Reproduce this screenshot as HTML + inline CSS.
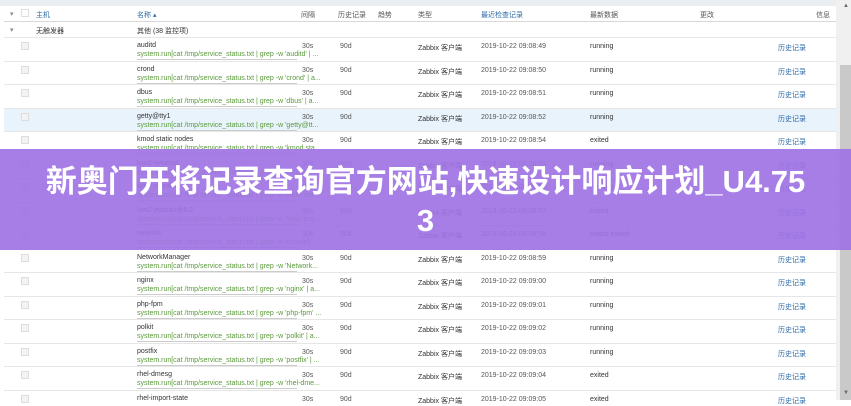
<!DOCTYPE html>
<html><head><meta charset="utf-8"><style>
*{margin:0;padding:0;box-sizing:border-box}
body{width:851px;height:400px;overflow:hidden;background:#fff;font-family:"Liberation Sans","Noto Sans CJK SC",sans-serif;font-size:7px;color:#555;position:relative}
.top{position:absolute;left:0;top:0;width:851px;height:6px;background:#ebeef0}
.sb{position:absolute;left:836px;top:0;width:15px;height:400px;background:#f0f0f0}
.thumb{position:absolute;left:840px;top:65px;width:11px;height:335px;background:#c9c9c9}
.wrap{position:absolute;left:4px;top:6px;width:832px;height:394px;background:#fff}
.r{position:absolute;left:4px;width:832px}
.t{position:absolute;white-space:nowrap}
.cb{position:absolute;left:21px;width:8px;height:8px;border:1px solid #ddd;background:#f3f3f3}
.g{color:#5a9a3a}
.b{color:#2b6aa8}
.ln{position:absolute;left:4px;width:832px;height:1px;background:#e6e6e6}
.ban{position:absolute;left:0;top:149px;width:851px;height:101px;background:rgba(160,115,228,0.92);color:#fff;font-weight:bold;font-size:31px;text-align:center;line-height:39px;padding-top:13px}
</style></head><body>
<div class="top"></div>
<div class="wrap"></div>
<div class="sb"></div><div class="thumb"></div>
<div class="t" style="left:843px;top:3px;font-size:6px;color:#666">▲</div>
<div class="t" style="left:843px;top:390px;font-size:6px;color:#666">▼</div>

<div class="t" style="left:10px;top:10px;color:#888">▾</div>
<div class="cb" style="top:9px;background:#fff"></div>
<div class="t b" style="left:36px;top:10px">主机</div>
<div class="t b" style="left:137px;top:10px">名称 ▴</div>
<div class="t" style="left:301px;top:10px">间隔</div>
<div class="t" style="left:338px;top:10px">历史记录</div>
<div class="t" style="left:378px;top:10px">趋势</div>
<div class="t" style="left:418px;top:10px">类型</div>
<div class="t b" style="left:481px;top:10px">最近检查记录</div>
<div class="t" style="left:590px;top:10px">最新数据</div>
<div class="t" style="left:700px;top:10px">更改</div>
<div class="t" style="left:816px;top:10px">信息</div>
<div class="ln" style="top:21px;background:#d8d8d8"></div>
<div class="t" style="left:10px;top:26px;color:#888">▾</div>
<div class="t" style="left:36px;top:26px;color:#333">无触发器</div>
<div class="t" style="left:137px;top:26px;color:#333">其他 (38 监控项)</div>

<div id="rows"></div>
<script>
var d=[["auditd","auditd' | ...","49"],["crond","crond' | a...","50"],["dbus","dbus' | a...","51"],["getty@tty1","getty@tt...","52"],["kmod static nodes","kmod sta...","54","exited"],["lvm2-lvmetad","lvm2-lvm...","55"],["lvm2-monitor","lvm2-mo...","56"],["lvm2-pvscan@8:2","lvm2-pvs...","57","exited"],["network","network' ...","58","exited exited"],["NetworkManager","Network...","59"],["nginx","nginx' | a...","00"],["php-fpm","php-fpm' ...","01"],["polkit","polkit' | a...","02"],["postfix","postfix' | ...","03"],["rhel-dmesg","rhel-dme...","04","exited"],["rhel-import-state","","05","exited"]];
var h="";
for(var i=0;i<d.length;i++){var y=37+i*23.5;var r=d[i];
if(i==3)h+='<div class="r" style="top:'+y+'px;height:23.5px;background:#e8f3fc"></div>';
h+='<div class="ln" style="top:'+y+'px"></div>';
h+='<div class="cb" style="top:'+(y+5)+'px"></div>';
h+='<div class="t" style="left:137px;top:'+(y+5)+'px;color:#333">'+r[0]+'</div>';
if(r[1])h+='<div class="t g" style="left:137px;top:'+(y+14)+'px">system.run[cat /tmp/service_status.txt | grep -w \''+r[1]+'</div><div class="ln" style="left:137px;width:160px;top:'+(y+22)+'px;background:#ccc"></div>';
var mm=(i<10?"08":"09");
h+='<div class="t" style="left:302px;top:'+(y+6)+'px">30s</div><div class="t" style="left:340px;top:'+(y+6)+'px">90d</div><div class="t" style="left:418px;top:'+(y+6)+'px;color:#333">Zabbix 客户端</div><div class="t" style="left:481px;top:'+(y+6)+'px">2019-10-22 09:'+mm+':'+r[2]+'</div><div class="t" style="left:590px;top:'+(y+6)+'px;color:#333">'+(r[3]||"running")+'</div><div class="t b" style="left:778px;top:'+(y+6)+'px">历史记录</div>';}
document.getElementById("rows").innerHTML=h;
</script>
<div class="ban">新奥门开将记录查询官方网站,快速设计响应计划_U4.75<br>3</div>
</body></html>
